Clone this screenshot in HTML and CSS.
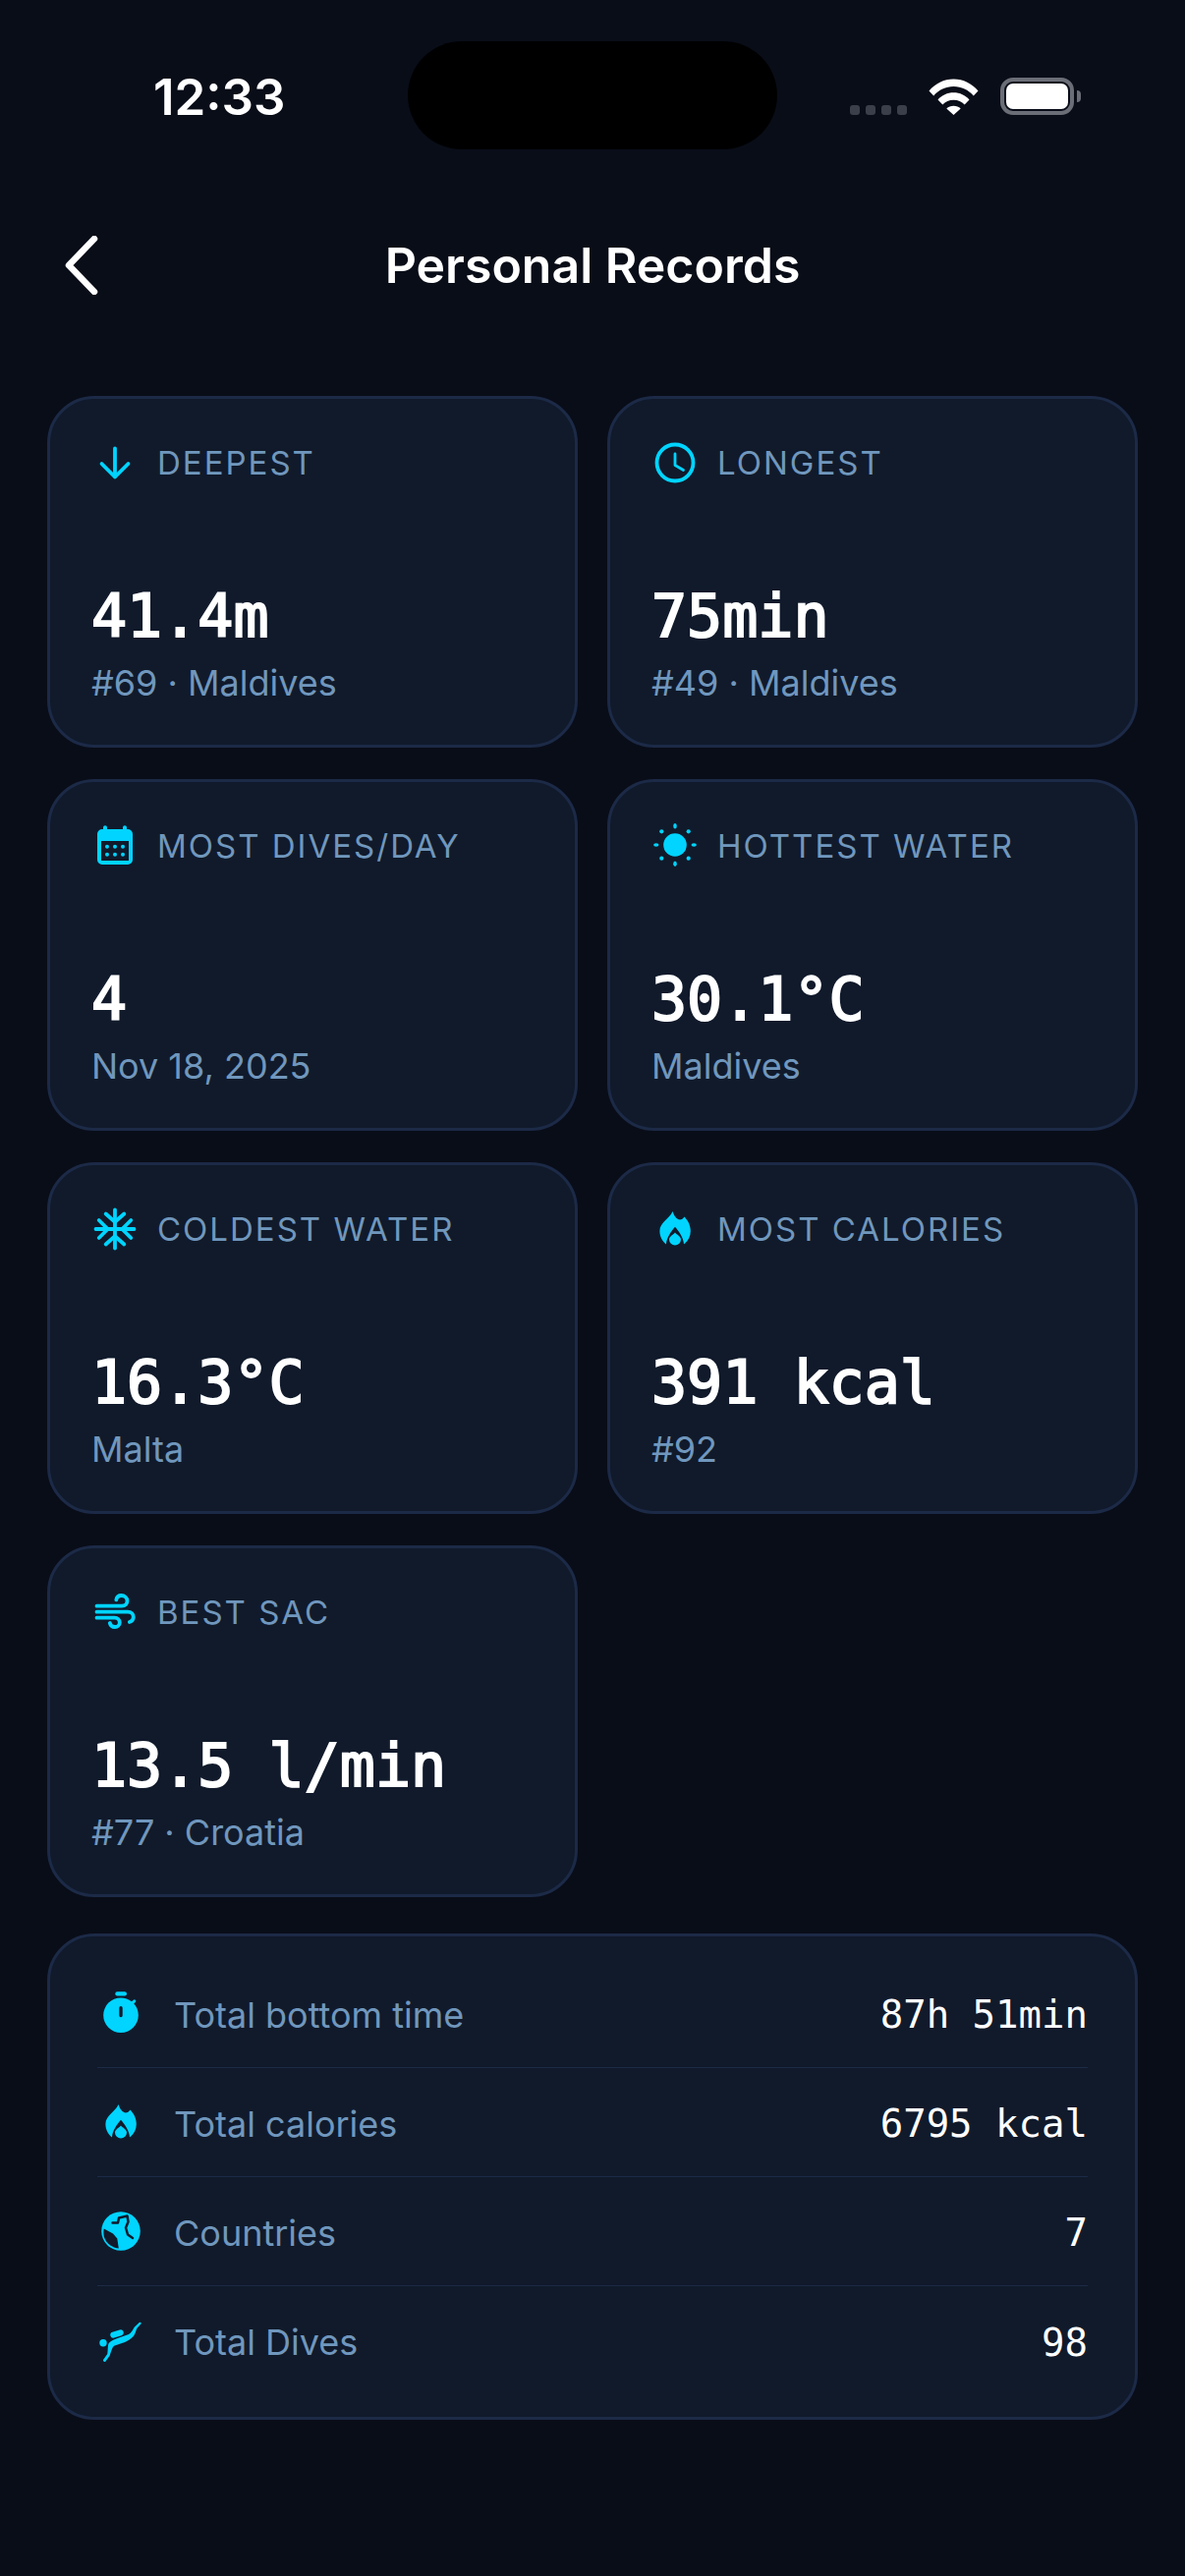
FILE: index.html
```html
<!DOCTYPE html>
<html lang="en">

<head>
    <meta charset="UTF-8">
    <title>Personal Records</title>
    <link rel="stylesheet" href="styles.css">
</head>

<body>
    <div class="screen">
        <div class="status">
            <span class="time">12:33</span>
            <div class="island"></div>
            <div class="status-right">
                <div class="signal"><i></i><i></i><i></i><i></i></div>
                <svg class="wifi" viewBox="0 0 51 37">
                    <path d="M0.5 12.5C7 5 15.500 0.500 25.500 0.500S44 5 50.500 12.500L45.800 17.500C40.500 11.500 33.500 8 25.500 8S10.500 11.500 5.200 17.500Z"/>
                    <path d="M9.500 21.500C13.500 17 19 14.300 25.500 14.300S37.500 17 41.500 21.500L36.700 26.500C33.800 23.500 30 21.700 25.500 21.700S17.200 23.500 14.300 26.500Z"/>
                    <path d="M18.300 30.500C20.200 28.800 22.700 27.800 25.500 27.800S30.800 28.800 32.700 30.500L25.500 37Z"/>
                </svg>
                <div class="battery"><div class="battery-fill"></div></div>
                <div class="battery-nub"></div>
            </div>
        </div>

        <div class="nav">
            <svg class="back" viewBox="0 0 36 60">
                <path d="M31 3L5 30L31 57"/>
            </svg>
            <h1>Personal Records</h1>
        </div>

        <div class="records">
            <div class="card">
                <div class="card-head">
                    <svg class="icon line" viewBox="0 0 48 48"><path d="M24 9.500V38.500M10.500 25L24 38.500L37.500 25"/></svg>
                    <span class="label">DEEPEST</span>
                </div>
                <div>
                    <div class="value">41.4m</div>
                    <div class="sub">#69 · Maldives</div>
                </div>
            </div>
            <div class="card">
                <div class="card-head">
                    <svg class="icon line" viewBox="0 0 48 48"><circle cx="24" cy="24" r="18.500"/><path class="thin" d="M24 15V26.500L32.500 31.500"/></svg>
                    <span class="label">LONGEST</span>
                </div>
                <div>
                    <div class="value">75min</div>
                    <div class="sub">#49 · Maldives</div>
                </div>
            </div>
            <div class="card">
                <div class="card-head">
                    <svg class="icon fill" viewBox="0 0 48 48">
                        <path fill-rule="evenodd" d="M11.500 7H12V5.200A2 2 0 0 1 16 5.200V7H32V5.200A2 2 0 0 1 36 5.200V7H37A5 5 0 0 1 42 12V38A5 5 0 0 1 37 43H11A5 5 0 0 1 6 38V12A5 5 0 0 1 11 7ZM10 19V39H38V19Z"/>
                        <circle cx="16" cy="24.700" r="2"/><circle cx="24" cy="24.700" r="2"/><circle cx="32" cy="24.700" r="2"/>
                        <circle cx="16" cy="32.700" r="2"/><circle cx="24" cy="32.700" r="2"/><circle cx="32" cy="32.700" r="2"/>
                    </svg>
                    <span class="label">MOST DIVES/DAY</span>
                </div>
                <div>
                    <div class="value">4</div>
                    <div class="sub">Nov 18, 2025</div>
                </div>
            </div>
            <div class="card">
                <div class="card-head">
                    <svg class="icon fill" viewBox="0 0 48 48">
                        <circle cx="24" cy="23" r="11.800"/>
                        <ellipse cx="24" cy="3.800" rx="1.800" ry="2.700"/><ellipse cx="24" cy="42.200" rx="1.800" ry="2.700"/>
                        <ellipse cx="4.800" cy="23" rx="2.700" ry="1.800"/><ellipse cx="43.200" cy="23" rx="2.700" ry="1.800"/>
                        <circle cx="10.300" cy="9.300" r="2.100"/><circle cx="37.700" cy="9.300" r="2.100"/>
                        <circle cx="10.300" cy="36.700" r="2.100"/><circle cx="37.700" cy="36.700" r="2.100"/>
                    </svg>
                    <span class="label">HOTTEST WATER</span>
                </div>
                <div>
                    <div class="value">30.1°C</div>
                    <div class="sub">Maldives</div>
                </div>
            </div>
            <div class="card">
                <div class="card-head">
                    <svg class="icon line" viewBox="0 0 48 48">
                        <path d="M24 4.500V43.500M4.500 24H43.500"/>
                        <path d="M14.700 8.500L24 16.700L33.300 8.500M14.700 39.500L24 31.300L33.300 39.500M7.700 15L16.700 24L7.700 33M40.300 15L31.300 24L40.300 33"/>
                    </svg>
                    <span class="label">COLDEST WATER</span>
                </div>
                <div>
                    <div class="value">16.3°C</div>
                    <div class="sub">Malta</div>
                </div>
            </div>
            <div class="card">
                <div class="card-head">
                    <svg class="icon fill" viewBox="0 0 48 48">
                        <use href="#flame"/>
                    </svg>
                    <span class="label">MOST CALORIES</span>
                </div>
                <div>
                    <div class="value">391 kcal</div>
                    <div class="sub">#92</div>
                </div>
            </div>
            <div class="card">
                <div class="card-head">
                    <svg class="icon line" viewBox="0 0 48 48">
                        <path d="M5.500 17.700H31C34.500 17.700 36.500 15.500 36.500 12.500C36.500 9.300 33.800 7 30.500 7C27.800 7 25.800 8.800 25.300 11.300"/>
                        <path d="M5.500 23.700H37C40.500 23.700 42.800 26 42.800 29C42.800 31.500 41.200 33.300 38.800 34"/>
                        <path d="M5.500 29.700H23.700C26.700 29.700 28.800 31.800 28.800 34.500C28.800 37 26.800 39 24 39C21.300 39 19.300 37.200 18.800 35"/>
                    </svg>
                    <span class="label">BEST SAC</span>
                </div>
                <div>
                    <div class="value">13.5 l/min</div>
                    <div class="sub">#77 · Croatia</div>
                </div>
            </div>
        </div>

        <div class="summary">
            <div class="row">
                <svg class="icon fill" viewBox="0 0 48 48">
                    <rect x="18.300" y="2.200" width="11.700" height="4.300" rx="2.100"/>
                    <path fill-rule="evenodd" d="M24 8.400C28.200 8.400 32 9.900 35 12.300L36.700 10.700A1.500 1.500 0 0 1 38.900 12.800L37.300 14.500C40.200 17.600 41.800 21.700 41.800 26.200A17.800 17.800 0 0 1 6.200 26.200A17.800 17.800 0 0 1 24 8.400ZM24 17A1.700 1.700 0 0 0 22.300 18.700V26.500A1.700 1.700 0 0 0 25.700 26.500V18.700A1.700 1.700 0 0 0 24 17Z"/>
                </svg>
                <span class="row-label">Total bottom time</span>
                <span class="row-value">87h 51min</span>
            </div>
            <div class="row">
                <svg class="icon fill" viewBox="0 0 48 48">
                    <g id="flame">
                        <path d="M21.500 6C22.500 9 24 12.500 27 14C29.500 15 31.800 14 33.500 11.500C37 15 39.800 20 39.800 26C39.800 31.500 37.500 36 33 39.500C32.500 32 28 26.500 24 21.700C20 26.500 15.500 32 15 39.500C10.800 36 8.400 31.500 8.400 26C8.400 17 18.500 13.500 21.500 6Z"/>
                        <path d="M24 27.500C26 30 30 31.500 30 34.500A6 6 0 0 1 18 34.500C18 31.500 22 30 24 27.500Z"/>
                    </g>
                </svg>
                <span class="row-label">Total calories</span>
                <span class="row-value">6795 kcal</span>
            </div>
            <div class="row">
                <svg class="icon fill" viewBox="0 0 48 48">
                    <circle cx="24" cy="24" r="19.800"/>
                    <path class="cut" d="M6.800 21.500L16 26.500L20.300 31.500L21.800 41.500C14.500 40.800 8.700 36 6.800 29.500Q6 25 6.800 21.500Z"/>
                    <path class="cut-line" d="M15.500 15.500L21 15.500L22 10.500L30.500 8.500L31.500 14.500L29 20.500L31 27.500L36 31"/>
                </svg>
                <span class="row-label">Countries</span>
                <span class="row-value">7</span>
            </div>
            <div class="row">
                <svg class="icon fill" viewBox="0 0 48 48">
                    <circle cx="6" cy="25.700" r="3.700"/>
                    <path class="tank" d="M16.300 17.700L23.700 15.300"/>
                    <path d="M44.500 5.300C44.800 5.600 44.800 6 44.600 6.300L40.500 10.800C39.500 12.500 39 16 37 18.700C34 22.500 28 25 24.300 26.300L17 28.700C15.300 30 14 35 12.700 38.700L8.300 44.700C7.500 45.300 5.700 44.500 6 43L10.300 37C11 33 10.500 28 11.700 26C14 23.500 18 22 22.700 20.300L32 17C34.500 15.500 36 13 37.700 9.700L42.700 5C43.300 4.700 44 4.900 44.500 5.300Z"/>
                </svg>
                <span class="row-label">Total Dives</span>
                <span class="row-value">98</span>
            </div>
        </div>
    </div>
</body>

</html>
```

FILE: styles.css
```css
* {
    margin: 0;
    padding: 0;
    box-sizing: border-box;
}

body {
    background: #090d18;
    font-family: "Inter", "Liberation Sans", sans-serif;
}

.screen {
    width: 1206px;
    height: 2622px;
    padding: 0 48px;
    position: relative;
    overflow: hidden;
}

/* status bar */
.status {
    height: 196px;
    margin: 0 -48px;
    padding: 0 106px 0 156px;
    display: flex;
    align-items: center;
    justify-content: space-between;
}

.time {
    font-size: 51px;
    font-weight: 600;
    color: #fff;
}

.island {
    width: 376px;
    height: 110px;
    border-radius: 55px;
    background: #000;
    position: absolute;
    left: 415px;
    top: 42px;
}

.status-right {
    display: flex;
    align-items: flex-end;
    height: 38px;
}

.signal {
    display: flex;
    gap: 6px;
    margin-right: 22px;
}

.signal i {
    width: 10px;
    height: 10px;
    border-radius: 3px;
    background: #3a3f4a;
}

.wifi {
    width: 51px;
    height: 37px;
    fill: #fff;
    margin-right: 22px;
}

.battery {
    width: 75px;
    height: 38px;
    border: 4px solid #6b6e76;
    border-radius: 13px;
    padding: 2px;
}

.battery-fill {
    height: 100%;
    border-radius: 7px;
    background: #fff;
}

.battery-nub {
    width: 4px;
    height: 12px;
    margin: 0 0 13px 3px;
    border-radius: 0 4px 4px 0;
    background: #6b6e76;
}

/* nav */
.nav {
    height: 148px;
    display: flex;
    align-items: center;
    justify-content: center;
    position: relative;
}

.back {
    width: 36px;
    height: 60px;
    fill: none;
    stroke: #fff;
    stroke-width: 6.500;
    stroke-linecap: round;
    stroke-linejoin: round;
    position: absolute;
    left: 17px;
    top: 44px;
}

h1 {
    font-size: 50px;
    font-weight: 600;
    color: #fff;
}

/* record cards */
.records {
    margin-top: 59px;
    display: grid;
    grid-template-columns: 540px 540px;
    grid-auto-rows: 358px;
    gap: 32px 30px;
}

.card {
    padding: 41px 42px 39px;
    background: #101a2b;
    border: 3px solid #1c2a47;
    border-radius: 48px;
    display: flex;
    flex-direction: column;
    justify-content: space-between;
}

.card-head {
    display: flex;
    align-items: center;
    gap: 19px;
}

.icon {
    width: 48px;
    height: 48px;
    flex: none;
}

.fill {
    fill: #00d4ff;
}

.line {
    fill: none;
    stroke: #00d4ff;
    stroke-width: 3.800;
    stroke-linecap: round;
    stroke-linejoin: round;
}

.line .thin {
    stroke-width: 2.800;
}

.label {
    font-size: 33px;
    letter-spacing: 2px;
    color: #7097bd;
}

.value {
    font-family: "DejaVu Sans Mono", "Liberation Mono", monospace;
    font-size: 60px;
    font-weight: 400;
    -webkit-text-stroke: 2px #fff;
    line-height: 72px;
    color: #fff;
}

.sub {
    margin-top: 8px;
    font-size: 36px;
    line-height: 48px;
    color: #7097bd;
}

/* totals */
.summary {
    margin-top: 37px;
    padding: 23px 48px 22px;
    background: #101a2b;
    border: 3px solid #1c2a47;
    border-radius: 48px;
}

.row {
    height: 111px;
    display: flex;
    align-items: center;
    gap: 30px;
    border-bottom: 1px solid #1c2a47;
}

.row:last-child {
    border-bottom: 0;
}

.row-label {
    flex: 1;
    padding-top: 3px;
    font-size: 36px;
    color: #7097bd;
}

.row-value {
    padding-top: 3px;
    font-family: "DejaVu Sans Mono", "Liberation Mono", monospace;
    font-size: 39px;
    color: #fff;
}

.cut {
    fill: #101a2b;
}

.cut-line {
    fill: none;
    stroke: #101a2b;
    stroke-width: 2.500;
    stroke-linejoin: round;
    stroke-linecap: round;
}

.tank {
    fill: none;
    stroke: #00d4ff;
    stroke-width: 6;
    stroke-linecap: round;
}
```
